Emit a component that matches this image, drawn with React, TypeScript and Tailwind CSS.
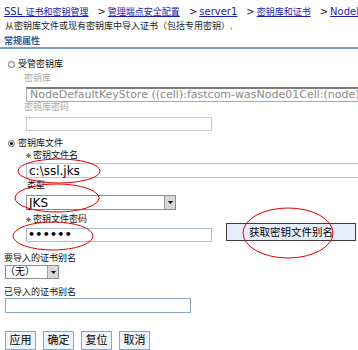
import React from "react";

function Radio({ checked }: { checked?: boolean }) {
  return (
    <span className="inline-flex items-center justify-center w-[7px] h-[7px] rounded-full border border-[#666] bg-white mr-[3px] ml-[8px]">
      {checked && <span className="w-[3px] h-[3px] rounded-full bg-black" />}
    </span>
  );
}

function Req() {
  return (
    <svg width="5" height="5" className="mr-[2px]">
      <path d="M2.5 0v5M0 2.5h5M0.7 0.7l3.6 3.6M4.3 0.7l-3.6 3.6" stroke="#8f7d36" strokeWidth="1" />
    </svg>
  );
}

function Arrow() {
  return (
    <span className="flex items-center justify-center w-[11px] h-full bg-[#d8d8d8] border-l border-[#9a9a9a]">
      <svg width="5" height="3">
        <path d="M0 0h5L2.5 3z" fill="#000" />
      </svg>
    </span>
  );
}

function Crumb({ children }: { children: React.ReactNode }) {
  return <span className="text-[#1c1cae] underline">{children}</span>;
}

function Sep() {
  return <span className="ml-[9px] mr-[2px] text-[10px] text-[#222]">&gt;</span>;
}

export default function App() {
  return (
    <div className='relative w-[358px] h-[350px] overflow-hidden bg-white text-[9px] leading-[12px] text-[#111] font-["DejaVu_Sans","Noto_Sans_CJK_SC",sans-serif]'>
      <div className="pt-[6px] pl-[4px] h-[18px] whitespace-nowrap">
        <Crumb>
          <span className="text-[10px]">SSL </span>证书和密钥管理
        </Crumb>
        <Sep />
        <Crumb>管理端点安全配置</Crumb>
        <Sep />
        <Crumb>
          <span className="text-[10px]">server1</span>
        </Crumb>
        <Sep />
        <Crumb>密钥库和证书</Crumb>
        <Sep />
        <Crumb>
          <span className="text-[10px]">NodeDefaultKeyStore</span>
        </Crumb>
      </div>
      <div className="mt-[2px] h-[12px] pl-[5px] whitespace-nowrap text-[#222]">
        从密钥库文件或现有密钥库中导入证书（包括专用密钥）.
      </div>
      <div className="mt-[3px] h-[12px] pl-[4px] font-bold text-[#2b5c9b]">常规属性</div>
      <div className="h-[2px] bg-[#7d9cc6]" />

      <div className="mt-[9px] h-[12px] flex items-center">
        <Radio />
        <span>受管密钥库</span>
      </div>
      <div className="pl-[26px]">
        <div className="mt-[2px] h-[12px] text-[#aaa] -ml-[2px]">密钥库</div>
        <div className="mt-[3px] h-[15px] w-[360px] flex items-center border border-[#a8a8a8] border-t-2 border-t-[#7c7c7c] pl-[3px] text-[11px] text-[#8a8a8a] whitespace-nowrap overflow-hidden">
          NodeDefaultKeyStore ((cell):fastcom-wasNode01Cell:(node):fastcom-wasNode01)
        </div>
        <div className="h-[10px] leading-[10px] text-[#aaa] -ml-[2px]">密钥库密码</div>
        <div className="mt-[5px] h-[14px] w-[186px] border border-[#c8c8c8]" />
      </div>

      <div className="mt-[6px] h-[12px] flex items-center">
        <Radio checked />
        <span>密钥库文件</span>
      </div>
      <div className="pl-[26px]">
        <div className="h-[12px] flex items-center">
          <Req />
          <span>密钥文件名</span>
        </div>
        <div className="mt-[2px] h-[15px] w-[340px] flex items-center border border-[#b4c4d6] pl-[2px] text-[12px] text-black">
          c:\ssl.jks
        </div>
        <div className="mt-[1px] h-[12px] pl-[1px]">类型</div>
        <div className="mt-[4px] h-[15px] w-[150px] flex items-stretch border border-[#8c8c8c] bg-white">
          <span className="flex-1 flex items-center pl-[2px] text-[12px] text-black">JKS</span>
          <Arrow />
        </div>
        <div className="flex items-end">
          <div>
            <div className="mt-[3px] h-[12px] flex items-center">
              <Req />
              <span>密钥文件密码</span>
            </div>
            <div className="mt-[3px] h-[14px] w-[186px] flex items-center border border-[#a9bdd3] pl-[1px] text-[11px] font-bold text-black tracking-[0.3px]">
              ••••••
            </div>
          </div>
          <div className="ml-[14px] mb-[1px] h-[18px] w-[130px] flex items-center justify-center border border-[#3c3c3c] bg-[#e7eefb] text-[10.5px] text-black">
            获取密钥文件别名
          </div>
        </div>
      </div>

      <div className="pl-[4px]">
        <div className="mt-[10px] h-[12px]">要导入的证书别名</div>
        <div className="mt-[1px] ml-[1px] h-[14px] w-[54px] flex items-stretch border border-[#8c8c8c]">
          <span className="flex-1 flex items-center text-[10px] text-black -ml-[1px]">（无）</span>
          <Arrow />
        </div>
        <div className="mt-[7px] h-[12px]">已导入的证书别名</div>
        <div className="ml-[1px] h-[15px] w-[186px] border border-[#8aa4c2]" />
        <div className="mt-[18px] ml-[1px] flex gap-[7px]">
          {["应用", "确定", "复位", "取消"].map((b) => (
            <div
              key={b}
              className="h-[19px] w-[31px] flex items-center justify-center border border-[#8fa3bd] bg-[#eef3fc] text-[11px] text-black"
            >
              {b}
            </div>
          ))}
        </div>
      </div>

      <svg className="absolute inset-0 pointer-events-none" width="358" height="350">
        <g fill="none" stroke="#e00000" strokeWidth="1">
          <ellipse cx="59" cy="171" rx="41" ry="12" />
          <ellipse cx="57" cy="198" rx="42" ry="14" />
          <ellipse cx="53" cy="236" rx="40" ry="14" />
          <ellipse cx="288" cy="233" rx="45" ry="25" />
        </g>
      </svg>
    </div>
  );
}
